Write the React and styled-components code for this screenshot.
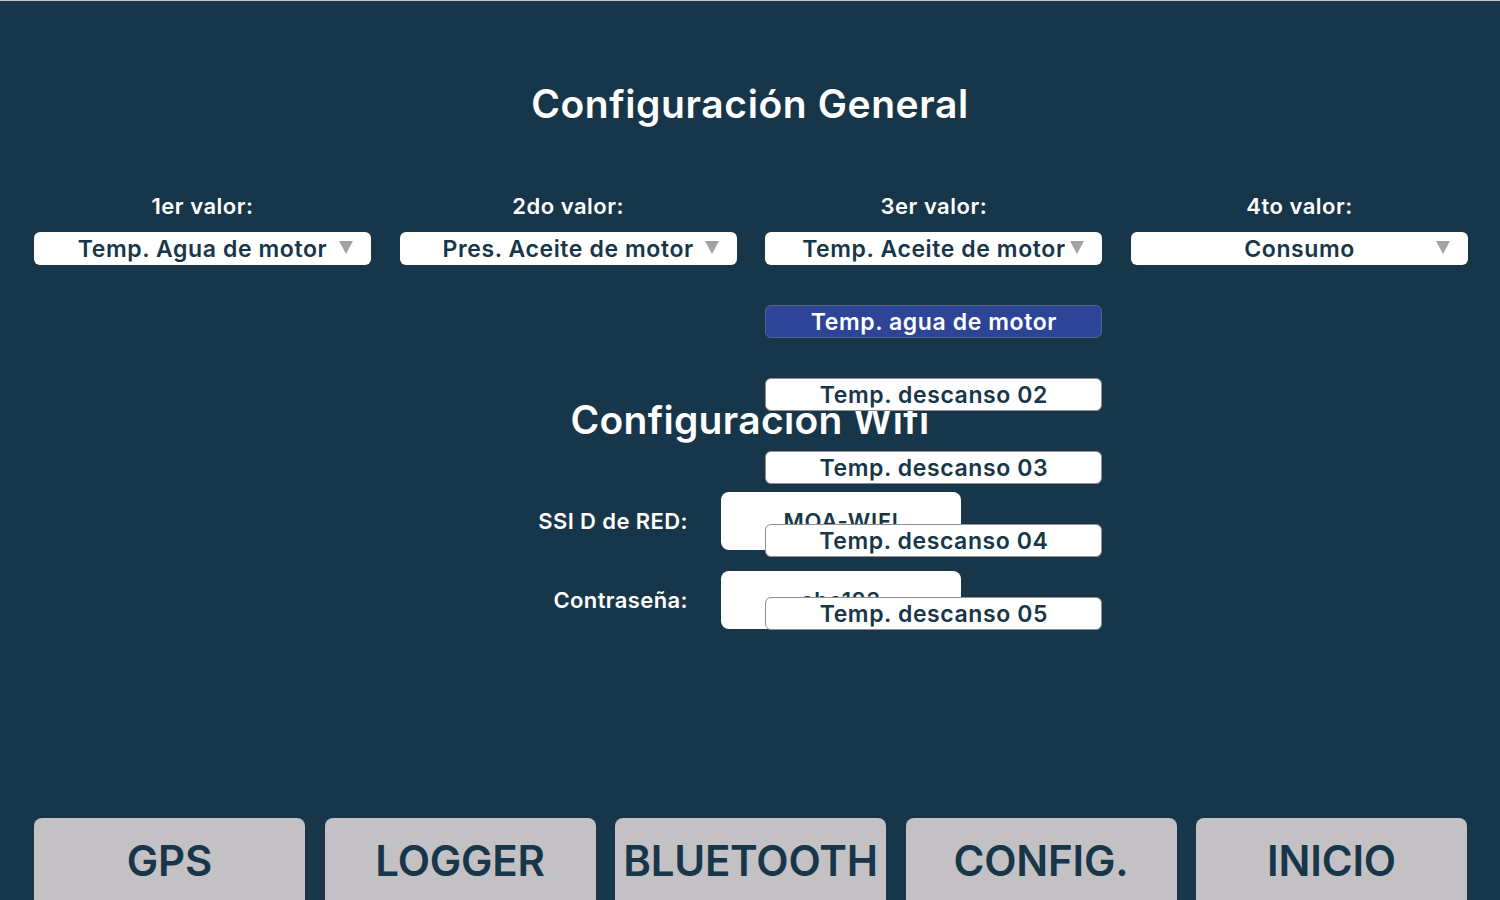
import styled, { createGlobalStyle } from "styled-components";

const GlobalStyle = createGlobalStyle`
  html, body {
    margin: 0;
    padding: 0;
    background: #17364a;
  }

  body {
    font-family: "Inter", "Noto Sans", sans-serif;
  }
`;

const Screen = styled.div`
  width: 1500px;
  height: 900px;
  overflow: hidden;
  background: #17364a;
  border-top: 1px solid #c9c9c9;
  box-sizing: border-box;
  display: flex;
  flex-direction: column;
  color: #fff;
`;

const Title = styled.h1`
  margin: 0;
  padding-top: ${(p) => p.$top}px;
  text-align: center;
  font-size: 39px;
  font-weight: 600;
  line-height: 46px;
  letter-spacing: ${(p) => p.$spacing}px;
`;

const ValuesGrid = styled.div`
  display: grid;
  grid-template-columns: repeat(4, 337px);
  column-gap: 28.7px;
  padding: 0 32px 0 34px;
  margin-top: 67px;
`;

const ValueColumn = styled.div`
  position: relative;
  display: flex;
  flex-direction: column;
  align-items: stretch;
  gap: 14px;
  z-index: ${(p) => (p.$open ? 5 : 1)};
`;

const ValueLabel = styled.div`
  text-align: center;
  font-size: 22px;
  font-weight: 600;
  line-height: 24px;
  letter-spacing: 0.5px;
`;

const Select = styled.div`
  height: 33px;
  background: #fff;
  border-radius: 6px;
  display: grid;
  grid-template-columns: 32px 1fr 32px;
  align-items: center;
  color: #17364a;
  font-size: 23px;
  font-weight: 600;
  letter-spacing: 0.6px;
`;

const SelectText = styled.span`
  text-align: center;
  white-space: nowrap;
`;

const Arrow = styled.span`
  justify-self: start;
  width: 0;
  height: 0;
  border-left: 7px solid transparent;
  border-right: 7px solid transparent;
  border-top: 13px solid #a3a3a3;
  margin-top: -2px;
`;

const Menu = styled.div`
  position: absolute;
  top: 111px;
  left: 0;
  right: 0;
  display: flex;
  flex-direction: column;
  gap: 40px;
`;

const MenuItem = styled.div`
  height: 33px;
  box-sizing: border-box;
  border-radius: 6px;
  border: 1px solid ${(p) => (p.$active ? "#54648f" : "#8f8f8f")};
  background: ${(p) => (p.$active ? "#2e4597" : "#fff")};
  color: ${(p) => (p.$active ? "#fff" : "#17364a")};
  display: flex;
  align-items: center;
  justify-content: center;
  font-size: 23px;
  font-weight: 600;
  letter-spacing: 0.6px;
`;

const WifiForm = styled.div`
  display: grid;
  grid-template-columns: 149px 240px;
  column-gap: 33px;
  row-gap: 21px;
  justify-content: center;
  align-items: center;
  margin-top: 49px;
`;

const FieldLabel = styled.div`
  display: flex;
  justify-content: flex-end;
  font-size: 22px;
  font-weight: 600;
  letter-spacing: 0.4px;
  white-space: nowrap;
`;

const Field = styled.div`
  height: 58px;
  background: #fff;
  border-radius: 8px;
  display: flex;
  align-items: center;
  justify-content: center;
  color: #17364a;
  font-size: 22px;
  font-weight: 600;
  letter-spacing: 0.8px;
`;

const Spacer = styled.div`
  flex: 1;
`;

const NavBar = styled.div`
  display: grid;
  grid-template-columns: repeat(5, 271px);
  column-gap: 19.5px;
  padding: 0 33px 0 34px;
  margin-bottom: -18px;
`;

const NavButton = styled.button`
  height: 100px;
  border: none;
  border-radius: 8px;
  background: #c3c1c4;
  color: #17364a;
  font-family: "Inter", "Noto Sans", sans-serif;
  font-size: 42px;
  font-weight: 600;
  padding: 0 0 15px;
  letter-spacing: -0.2px;
  cursor: pointer;
`;

const values = [
  { label: "1er valor:", value: "Temp. Agua de motor" },
  { label: "2do valor:", value: "Pres. Aceite de motor" },
  { label: "3er valor:", value: "Temp. Aceite de motor", open: true },
  { label: "4to valor:", value: "Consumo" },
];

const options = [
  "Temp. agua de motor",
  "Temp. descanso 02",
  "Temp. descanso 03",
  "Temp. descanso 04",
  "Temp. descanso 05",
];

const nav = ["GPS", "LOGGER", "BLUETOOTH", "CONFIG.", "INICIO"];

const App = () => {
  return (
    <>
      <GlobalStyle />
      <Screen>
        <Title $top={80} $spacing={0.6}>
          Configuración General
        </Title>
        <ValuesGrid>
          {values.map((v) => (
            <ValueColumn key={v.label} $open={v.open}>
              <ValueLabel>{v.label}</ValueLabel>
              <Select>
                <span />
                <SelectText>{v.value}</SelectText>
                <Arrow />
              </Select>
              {v.open && (
                <Menu>
                  {options.map((o, i) => (
                    <MenuItem key={o} $active={i === 0}>
                      {o}
                    </MenuItem>
                  ))}
                </Menu>
              )}
            </ValueColumn>
          ))}
        </ValuesGrid>
        <Title $top={132} $spacing={0.3}>
          Configuracion Wifi
        </Title>
        <WifiForm>
          <FieldLabel>SSI D de RED:</FieldLabel>
          <Field>MOA-WIFI</Field>
          <FieldLabel>Contraseña:</FieldLabel>
          <Field>abc123</Field>
        </WifiForm>
        <Spacer />
        <NavBar>
          {nav.map((n) => (
            <NavButton key={n}>{n}</NavButton>
          ))}
        </NavBar>
      </Screen>
    </>
  );
};

export default App;
